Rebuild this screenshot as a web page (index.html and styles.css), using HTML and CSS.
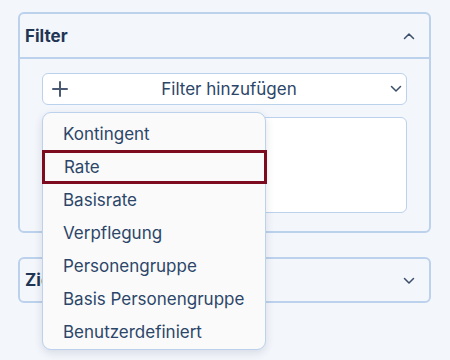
FILE: index.html
```html
<!DOCTYPE html>
<html lang="de">
<head>
<meta charset="utf-8">
<link rel="stylesheet" href="styles.css">
</head>
<body>
<div class="page">
  <section class="panel">
    <div class="panel-head">
      <span class="panel-title">Filter</span>
      <svg class="chev" width="12" height="8" viewBox="0 0 12 8"><path d="M1.5 6.5 L6 2 L10.5 6.5" fill="none" stroke="#3b4f6b" stroke-width="1.5" stroke-linecap="round" stroke-linejoin="round"/></svg>
    </div>
    <div class="panel-body">
      <div class="add-wrap">
        <button class="add-btn">
          <svg class="plus" width="16" height="16" viewBox="0 0 16 16"><path d="M8 1 V15 M1 8 H15" stroke="#4a5a72" stroke-width="2" stroke-linecap="round"/></svg>
          <span class="add-label">Filter hinzufügen</span>
          <svg class="chev" width="12" height="8" viewBox="0 0 12 8"><path d="M1.5 1.5 L6 6 L10.5 1.5" fill="none" stroke="#3b4f6b" stroke-width="1.5" stroke-linecap="round" stroke-linejoin="round"/></svg>
        </button>
        <ul class="menu">
          <li class="item">Kontingent</li>
          <li class="item active">Rate</li>
          <li class="item">Basisrate</li>
          <li class="item">Verpflegung</li>
          <li class="item">Personengruppe</li>
          <li class="item">Basis Personengruppe</li>
          <li class="item">Benutzerdefiniert</li>
        </ul>
      </div>
      <div class="box"></div>
    </div>
  </section>
  <section class="panel collapsed">
    <div class="panel-head">
      <span class="panel-title">Zielgruppe</span>
      <svg class="chev" width="12" height="8" viewBox="0 0 12 8"><path d="M1.5 1.5 L6 6 L10.5 1.5" fill="none" stroke="#3b4f6b" stroke-width="1.5" stroke-linecap="round" stroke-linejoin="round"/></svg>
    </div>
  </section>
</div>
</body>
</html>
```
FILE: styles.css
```css
* { box-sizing: border-box; }
html, body { margin: 0; padding: 0; }
body {
  background: #f3f6fb;
  font-family: Inter, "Noto Sans", sans-serif;
  color: #2c4669;
  width: 450px;
  height: 360px;
  overflow: hidden;
}
.page {
  padding: 12px 19px 0 18px;
  display: flex;
  flex-direction: column;
  gap: 24px;
}
.panel {
  border: 2px solid #bcd1ec;
  border-radius: 6px;
  background: #f3f6fb;
}
.panel-head {
  height: 45px;
  display: flex;
  align-items: center;
  justify-content: space-between;
  padding: 0 14px 0 5px;
  border-bottom: 2px solid #bcd1ec;
}
.collapsed .panel-head {
  height: 42px;
  border-bottom: none;
}
.collapsed .panel-head .chev { margin-top: 2px; }
.panel-title {
  font-weight: 700;
  font-size: 17px;
  color: #1f3554;
}
.panel-body {
  padding: 14px 22px 18px 22px;
  display: flex;
  flex-direction: column;
  gap: 12px;
}
.add-wrap { position: relative; }
.add-btn {
  width: 100%;
  height: 32px;
  background: #fff;
  border: 1.5px solid #bcd1ec;
  border-radius: 6px;
  display: flex;
  align-items: center;
  padding: 0 4px 0 9px;
  font-family: inherit;
  font-size: 17px;
  color: #2c4669;
}
.add-label { flex: 1; text-align: center; }
.plus { flex: none; }
.box {
  height: 96px;
  background: #fff;
  border: 1.5px solid #bcd1ec;
  border-radius: 6px;
}
.menu {
  position: absolute;
  left: 0;
  top: 39px;
  width: 224px;
  margin: 0;
  padding: 4px 0 1px;
  list-style: none;
  background: #fafafa;
  border: 1.5px solid #bcd1ec;
  border-radius: 9px;
  box-shadow: 0 3px 8px rgba(40, 60, 90, 0.14);
  z-index: 5;
}
.item {
  height: 33px;
  display: flex;
  align-items: center;
  padding-left: 20px;
  font-size: 17px;
  color: #2c4669;
}
.item.active {
  border: 3px solid #7c0b1f;
  margin: 0 -1.5px;
  padding-left: 19.5px;
  height: 34px;
  margin-bottom: -1px;
}
```
